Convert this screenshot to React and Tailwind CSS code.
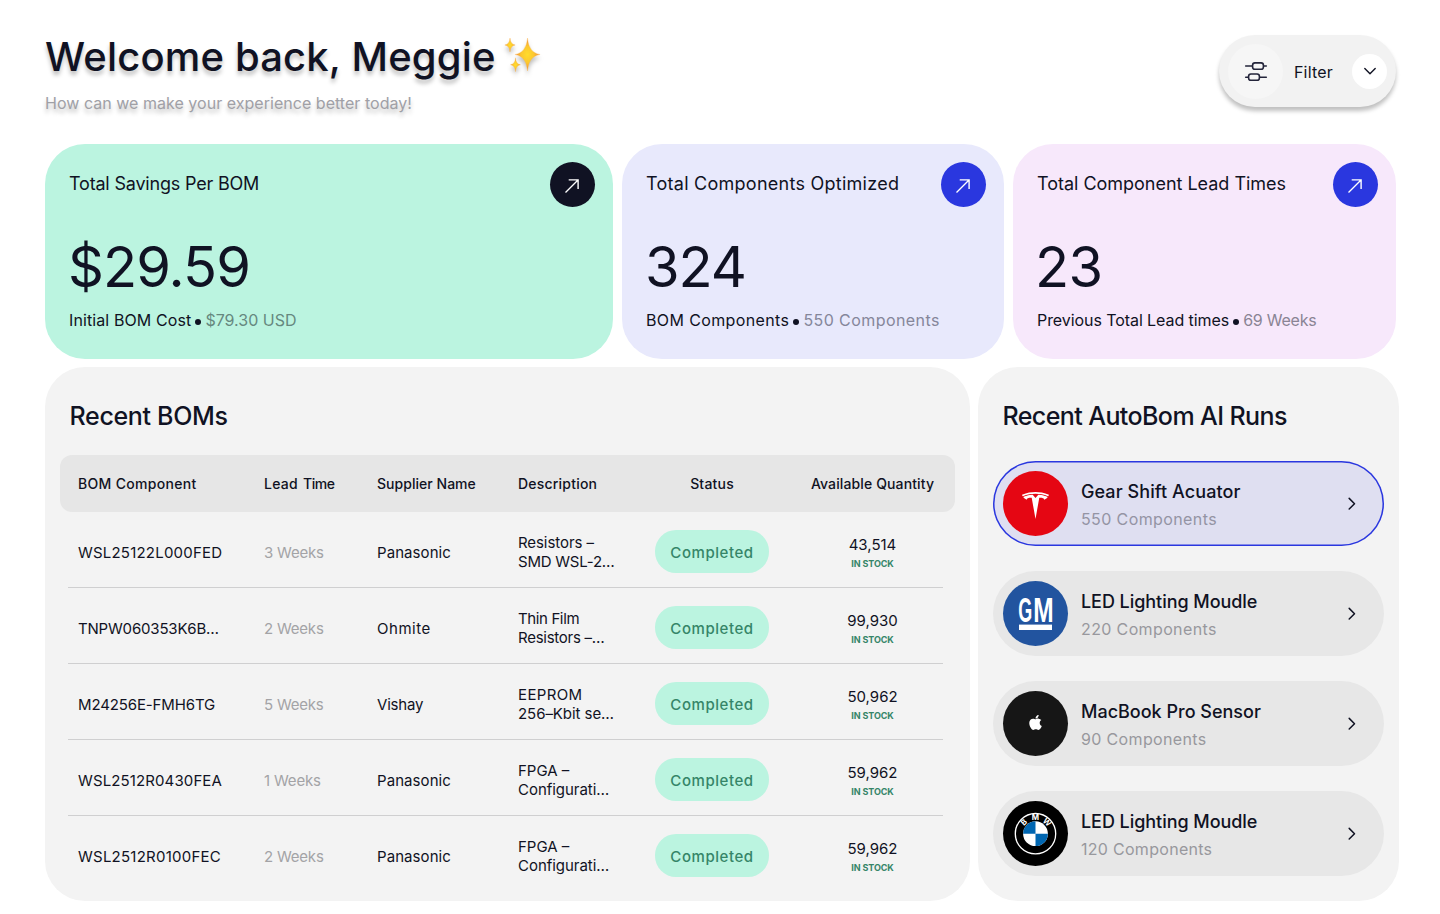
import React from "react";
import { SiTesla } from "react-icons/si";
import { FaApple } from "react-icons/fa";

const stats = [
  {
    title: "Total Savings Per BOM",
    titleCls: "tracking-[-0.0105em]",
    value: "$29.59",
    valueCls: "tracking-[-0.0165em] -ml-px",
    label: "Initial BOM Cost",
    labelCls: "tracking-[0.0065em]",
    note: "$79.30 USD",
    noteCls: "tracking-[0.001em]",
    card: "w-[568px] bg-[#bbf4e0]",
    button: "bg-[#101223]",
    noteColor: "text-[#66887f]",
  },
  {
    title: "Total Components Optimized",
    titleCls: "tracking-[0.0145em]",
    value: "324",
    valueCls: "tracking-[-0.018em] -ml-px",
    label: "BOM Components",
    labelCls: "tracking-[0.0235em]",
    note: "550 Components",
    noteCls: "tracking-[0.0265em]",
    card: "w-[382px] bg-[#e8e9fc]",
    button: "bg-[#2a37df]",
    noteColor: "text-[#85869a]",
  },
  {
    title: "Total Component Lead Times",
    titleCls: "tracking-[-0.001em]",
    value: "23",
    valueCls: "tracking-[-0.01em] -ml-0.5",
    label: "Previous Total Lead times",
    labelCls: "tracking-[-0.0045em]",
    note: "69 Weeks",
    noteCls: "tracking-[-0.0145em]",
    card: "w-[383px] bg-[#f7e8fb]",
    button: "bg-[#2a37df]",
    noteColor: "text-[#8a8494]",
  },
];

const rows = [
  {
    part: "WSL25122L000FED", partCls: "tracking-[0.014em]",
    lead: "3 Weeks", leadCls: "tracking-[-0.0136em]",
    supplier: "Panasonic", supplierCls: "tracking-[0.005em]",
    desc: ["Resistors –", "SMD WSL-2…"], descCls: ["tracking-[-0.005em]", "tracking-[-0.015em]"],
    qty: "43,514",
  },
  {
    part: "TNPW060353K6B…", partCls: "tracking-[-0.012em]",
    lead: "2 Weeks", leadCls: "tracking-[-0.0136em]",
    supplier: "Ohmite", supplierCls: "tracking-[0.035em]",
    desc: ["Thin Film", "Resistors –…"], descCls: ["tracking-[-0.025em]", "tracking-[-0.0175em]"],
    qty: "99,930",
  },
  {
    part: "M24256E-FMH6TG", partCls: "tracking-[-0.0089em]",
    lead: "5 Weeks", leadCls: "tracking-[-0.0136em]",
    supplier: "Vishay", supplierCls: "tracking-[-0.013em]",
    desc: ["EEPROM", "256–Kbit se…"], descCls: ["tracking-[0.025em]", "tracking-[-0.004em]"],
    qty: "50,962",
  },
  {
    part: "WSL2512R0430FEA", partCls: "tracking-[0.008em]",
    lead: "1 Weeks", leadCls: "tracking-[-0.0118em]",
    supplier: "Panasonic", supplierCls: "tracking-[0.005em]",
    desc: ["FPGA –", "Configurati…"], descCls: ["", "tracking-[-0.002em]"],
    qty: "59,962",
  },
  {
    part: "WSL2512R0100FEC", partCls: "tracking-[0.016em]",
    lead: "2 Weeks", leadCls: "tracking-[-0.0136em]",
    supplier: "Panasonic", supplierCls: "tracking-[0.005em]",
    desc: ["FPGA –", "Configurati…"], descCls: ["", "tracking-[-0.002em]"],
    qty: "59,962",
  },
];

const GRID = "grid grid-cols-[186px_113px_141px_119px_150px_171px]";

function Sparkles() {
  const star = (x, y, rx, ry) =>
    `M${x} ${y - ry} Q${x + rx * 0.1} ${y - ry * 0.1} ${x + rx} ${y} Q${x + rx * 0.1} ${y + ry * 0.1} ${x} ${y + ry} Q${x - rx * 0.1} ${y + ry * 0.1} ${x - rx} ${y} Q${x - rx * 0.1} ${y - ry * 0.1} ${x} ${y - ry}Z`;
  return (
    <svg width="44" height="44" viewBox="0 0 44 44" className="drop-shadow-[0_4px_2px_rgba(0,0,0,0.25)]">
      <defs>
        <radialGradient id="spark">
          <stop offset="0" stopColor="#ffdc2c" />
          <stop offset="0.5" stopColor="#fcc72f" />
          <stop offset="1" stopColor="#f0883c" />
        </radialGradient>
      </defs>
      <g fill="url(#spark)" stroke="#f7b548" strokeWidth="0.3">
        <path d={star(26.5, 19.5, 12.6, 16.5)} />
        <path d={star(9, 10, 5.2, 7)} />
        <path d={star(14.5, 29.8, 5, 7)} />
      </g>
    </svg>
  );
}

function FilterButton() {
  return (
    <button className="mt-[35px] flex h-[72px] w-[177px] items-center rounded-[36px] bg-[#f2f2f2] pr-[9px] pl-[9px] shadow-[0_4px_4px_rgba(0,0,0,0.25)]">
      <span className="flex size-[55px] items-center justify-center rounded-full bg-[#f6f6f6]">
        <svg width="24" height="20" viewBox="0 0 24 20" fill="none" stroke="#23243a" strokeWidth="1.6" strokeLinecap="round">
          <path d="M1.7 5H8M20 5h2.3M1.7 16.2H4M16 16.2h6.3" />
          <rect x="8.6" y="1.9" width="10.8" height="6.4" rx="2.3" />
          <rect x="4.6" y="13" width="10.8" height="6.4" rx="2.3" />
        </svg>
      </span>
      <span className="mt-[2px] ml-[11px] text-base tracking-[0.01em]">Filter</span>
      <span className="ml-auto flex size-[35px] items-center justify-center rounded-full bg-white">
        <svg width="14" height="10" viewBox="0 0 14 10" fill="none" stroke="#101223" strokeWidth="1.4" strokeLinecap="round" strokeLinejoin="round">
          <path d="M1.8 2.6 7 7.8l5.2-5.2" />
        </svg>
      </span>
    </button>
  );
}

function StatCard({ s }) {
  return (
    <section className={`flex h-[215px] flex-col rounded-[40px] pt-[18px] pr-[18px] pl-6 ${s.card}`}>
      <div className="flex h-[45px] justify-between">
        <h2 className={`mt-[8px] text-lg leading-[27px] ${s.titleCls}`}>{s.title}</h2>
        <span className={`flex size-[45px] items-center justify-center rounded-full ${s.button}`}>
          <svg width="16" height="16" viewBox="0 0 16 16" fill="none" stroke="#fff" strokeWidth="1.4">
            <path d="M0.5 15.5 13 3M3.7 2.9h9.4v9.2" />
          </svg>
        </span>
      </div>
      <p className={`mt-[25px] text-[56px] leading-[70px] ${s.valueCls}`}>{s.value}</p>
      <p className="mt-[6px] flex items-center text-base leading-6">
        <span className={s.labelCls}>{s.label}</span>
        <span className="mt-[3px] mr-1 ml-1 size-[6px] rounded-full bg-[#101223]" />
        <span className={`${s.noteCls} ${s.noteColor}`}>{s.note}</span>
      </p>
    </section>
  );
}

function GmLogo() {
  return (
    <svg width="65" height="65" viewBox="0 0 65 65" className="overflow-visible">
      <g fill="#fff" fontFamily="Liberation Sans" fontWeight="700" fontSize="35">
        <text x="15.2" y="41" textLength="14" lengthAdjust="spacingAndGlyphs">G</text>
        <text x="30.2" y="41" textLength="20.4" lengthAdjust="spacingAndGlyphs">M</text>
        <rect x="16" y="43.6" width="33" height="5.4" />
      </g>
    </svg>
  );
}

function BmwLogo() {
  return (
    <svg width="65" height="65" viewBox="0 0 65 65">
      <circle cx="32.5" cy="32.7" r="20.2" fill="none" stroke="#fff" strokeWidth="1.3" />
      <circle cx="32.5" cy="32.7" r="12.4" fill="#fff" />
      <path d="M32.5 32.7V20.3A12.4 12.4 0 0 0 20.1 32.7ZM32.5 32.7v12.4A12.4 12.4 0 0 0 44.9 32.7Z" fill="#0066b1" />
      <g fill="#fff" fontFamily="Inter" fontWeight="700" fontSize="7.8" textAnchor="middle">
        <text transform="rotate(-45 32.5 32.7)" x="32.5" y="19.1">B</text>
        <text x="32.5" y="19.3">M</text>
        <text transform="rotate(45 32.5 32.7)" x="32.5" y="19.1">W</text>
      </g>
    </svg>
  );
}

const runs = [
  {
    name: "Gear Shift Acuator", nameCls: "tracking-[0.004em]", count: "550 Components", countCls: "tracking-[0.0245em]",
    active: true, bg: "bg-[#e50613]", logo: <SiTesla size={27} color="#fff" className="translate-y-[2px]" />,
  },
  {
    name: "LED Lighting Moudle", nameCls: "tracking-[-0.003em]", count: "220 Components", countCls: "tracking-[0.023em]",
    bg: "bg-[#22549f]", logo: <GmLogo />,
  },
  {
    name: "MacBook Pro Sensor", nameCls: "", count: "90 Components", countCls: "tracking-[0.0215em]",
    bg: "bg-[#161616]", logo: <FaApple size={17} color="#fff" className="-translate-y-px" />,
  },
  {
    name: "LED Lighting Moudle", nameCls: "tracking-[-0.003em]", count: "120 Components", countCls: "tracking-[0.018em]",
    bg: "bg-black", logo: <BmwLogo />,
  },
];

function RunItem({ r }) {
  return (
    <li
      className={`flex h-[85px] items-center rounded-[42.5px] pr-[25px] pl-[10px] ${
        r.active ? "bg-[#dfdff1] shadow-[inset_0_0_0_1.5px_#2a37df]" : "bg-[#e7e7e7]"
      }`}
    >
      <span className={`flex size-[65px] items-center justify-center rounded-full ${r.bg}`}>{r.logo}</span>
      <span className="mt-[3px] ml-[13px] flex flex-col">
        <span className={`-mb-px pt-px text-lg leading-7 font-medium ${r.nameCls}`}>{r.name}</span>
        <span className={`text-base leading-7 ${r.active ? "text-[#9494a4]" : "text-[#98989d]"} ${r.countCls}`}>{r.count}</span>
      </span>
      <svg className="ml-auto" width="14" height="16" viewBox="0 0 14 16" fill="none" stroke="#101223" strokeWidth="1.5" strokeLinecap="round" strokeLinejoin="round">
        <path d="M4.2 2.4 9.5 7.7 4.2 13" />
      </svg>
    </li>
  );
}

export default function App() {
  return (
    <div className="h-[914px] w-[1440px] overflow-hidden bg-white pl-[45px] font-['Inter',sans-serif] whitespace-nowrap text-[#101223]">
      <header className="flex h-[144px] w-[1351px] justify-between">
        <div className="pt-[31px]">
          <h1 className="flex h-[52px] items-center text-[40px] leading-[52px] font-medium tracking-[0.004em] [text-shadow:0_4px_4px_rgba(0,0,0,0.25)]">
            Welcome back, Meggie
            <span className="ml-[5px]">
              <Sparkles />
            </span>
          </h1>
          <p className="mt-[8px] text-base leading-6 tracking-[0.0018em] text-[#a0a0a6] [text-shadow:0_4px_4px_rgba(0,0,0,0.25)]">
            How can we make your experience better today!
          </p>
        </div>
        <FilterButton />
      </header>

      <div className="flex gap-[9px]">
        {stats.map((s) => (
          <StatCard key={s.title} s={s} />
        ))}
      </div>

      <div className="mt-2 flex gap-2">
        <section className="h-[534px] w-[925px] rounded-[40px] bg-[#f3f3f3] px-[15px] pt-[33px]">
          <h2 className="ml-[9.5px] text-[25px] leading-8 font-medium tracking-[-0.013em]">Recent BOMs</h2>
          <div className={`mt-[23px] h-[57px] items-center rounded-xl bg-[#e6e6e6] pl-[18px] text-sm font-medium ${GRID}`}>
            <span className="tracking-[0.022em]">BOM Component</span>
            <span className="flex gap-[5px]">
              <span className="tracking-[0.02em]">Lead</span>
              <span className="tracking-[-0.03em]">Time</span>
            </span>
            <span className="tracking-[0.0025em]">Supplier Name</span>
            <span className="tracking-[0.015em]">Description</span>
            <span className="text-center tracking-[0.0141em]">Status</span>
            <span className="text-center tracking-[0.0087em]">Available Quantity</span>
          </div>
          <div className="mr-3 ml-2">
            {rows.map((r, i) => (
              <div
                key={r.part}
                className={`h-[76px] items-center border-b pl-[10px] text-[15px] leading-[19px] ${i < 4 ? "border-[#cfcfd0]" : "border-transparent"} ${GRID}`}
              >
                <span className={`mt-[5px] ${r.partCls}`}>{r.part}</span>
                <span className={`mt-[5px] text-[#a3a3a6] ${r.leadCls}`}>{r.lead}</span>
                <span className={`mt-[5px] ${r.supplierCls}`}>{r.supplier}</span>
                <span className="mt-[5px] flex flex-col">
                  <span className={r.descCls[0]}>{r.desc[0]}</span>
                  <span className={r.descCls[1]}>{r.desc[1]}</span>
                </span>
                <span className="mt-[3px] flex h-[43px] w-[114px] items-center justify-center justify-self-center rounded-[21px] bg-[#bbf4e0] pt-[2px] font-medium tracking-[0.037em] text-[#358568]">
                  Completed
                </span>
                <span className="mt-[8px] flex flex-col items-center">
                  <span>{r.qty}</span>
                  <span className="text-[9px] font-bold tracking-[-0.0115em] text-[#358568]">IN STOCK</span>
                </span>
              </div>
            ))}
          </div>
        </section>

        <section className="h-[534px] w-[421px] rounded-[40px] bg-[#f3f3f3] px-[15px] pt-[33px]">
          <h2 className="ml-[9.5px] text-[25px] leading-8 font-medium tracking-[-0.0235em]">Recent AutoBom AI Runs</h2>
          <ul className="mt-[29px] flex flex-col gap-[25px]">
            {runs.map((r, i) => (
              <RunItem key={i} r={r} />
            ))}
          </ul>
        </section>
      </div>
    </div>
  );
}
